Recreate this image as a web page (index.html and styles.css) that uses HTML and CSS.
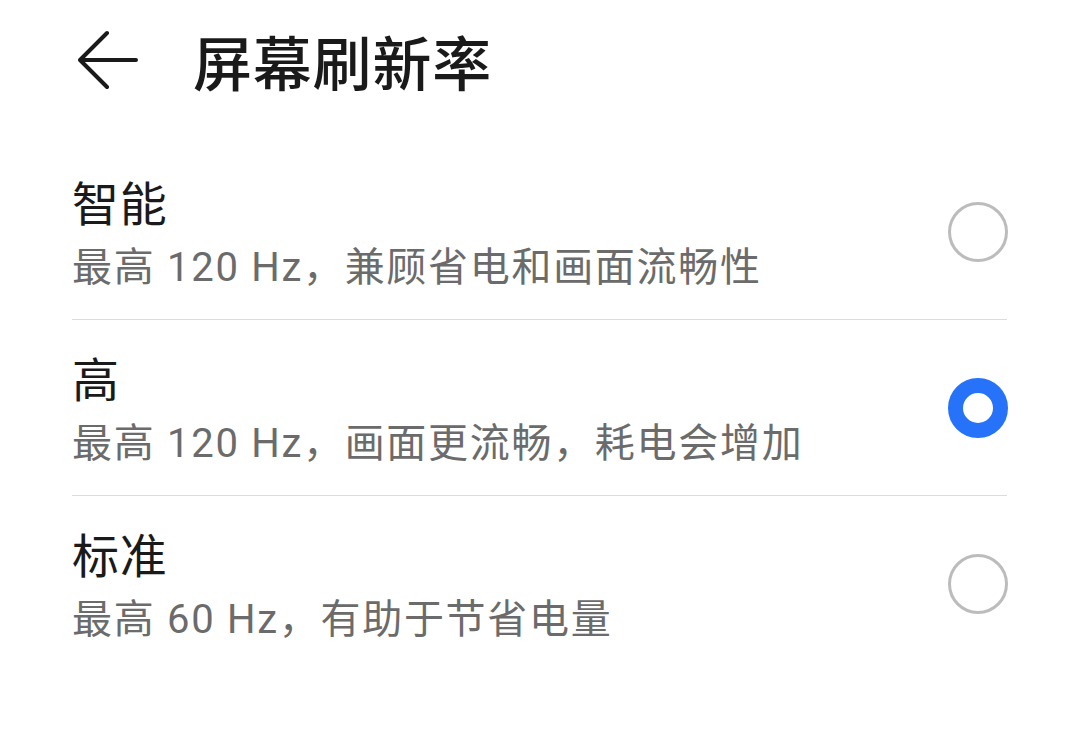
FILE: index.html
```html
<!DOCTYPE html>
<html lang="zh-CN">
<head>
<meta charset="utf-8">
<title>屏幕刷新率</title>
<link rel="stylesheet" href="styles.css">
</head>
<body>
<header class="header">
  <svg class="back" width="60" height="60" viewBox="0 0 60 60" aria-hidden="true">
    <path d="M58 30 H3 M29 3 L2 30 L29 57" fill="none" stroke="#1a1a1a" stroke-width="4" stroke-linecap="round" stroke-linejoin="round"/>
  </svg>
  <h1 class="title">屏幕刷新率</h1>
</header>
<ul class="list">
  <li class="item">
    <div class="text">
      <div class="item-title">智能</div>
      <div class="item-sub">最高 120 Hz，兼顾省电和画面流畅性</div>
    </div>
    <span class="radio"></span>
  </li>
  <li class="item">
    <div class="text">
      <div class="item-title">高</div>
      <div class="item-sub">最高 120 Hz，画面更流畅，耗电会增加</div>
    </div>
    <span class="radio checked"></span>
  </li>
  <li class="item">
    <div class="text">
      <div class="item-title">标准</div>
      <div class="item-sub">最高 60 Hz，有助于节省电量</div>
    </div>
    <span class="radio"></span>
  </li>
</ul>
</body>
</html>
```

FILE: styles.css
```css
html, body {
  margin: 0;
  padding: 0;
  background: #ffffff;
}
body {
  font-family: "Roboto", "Noto Sans CJK SC", sans-serif;
  color: #1a1a1a;
}
.header {
  height: 126px;
  display: flex;
  align-items: center;
  padding-left: 78px;
  gap: 55px;
  box-sizing: border-box;
}
.back {
  display: block;
  flex: none;
  margin-top: -6px;
}
.title {
  margin: 0;
  font-size: 59px;
  font-weight: 500;
  line-height: 70px;
  margin-top: -4px;
  letter-spacing: 0.8px;
  font-family: "Noto Sans CJK SC", sans-serif;
  color: #1a1a1a;
}
.list {
  list-style: none;
  margin: 18px 72px 0 72px;
  padding: 0;
}
.item {
  height: 176px;
  box-sizing: border-box;
  display: flex;
  align-items: center;
  justify-content: space-between;
  border-bottom: 1px solid #dcdcdc;
}
.item:last-child {
  border-bottom: none;
}
.text {
  margin-top: 2px;
}
.item-title {
  font-family: "Noto Sans CJK SC", sans-serif;
  font-size: 47px;
  line-height: 62px;
  letter-spacing: 0.8px;
  color: #1a1a1a;
  margin-bottom: 8px;
}
.item-sub {
  font-size: 40px;
  line-height: 56px;
  letter-spacing: 1.7px;
  color: #6b6b6b;
}
.radio {
  flex: none;
  width: 60px;
  height: 60px;
  box-sizing: border-box;
  border-radius: 50%;
  border: 3px solid #bcbcbc;
  margin-right: -1px;
}
.radio.checked {
  border: 15px solid #2673fa;
  background: #ffffff;
}
```
